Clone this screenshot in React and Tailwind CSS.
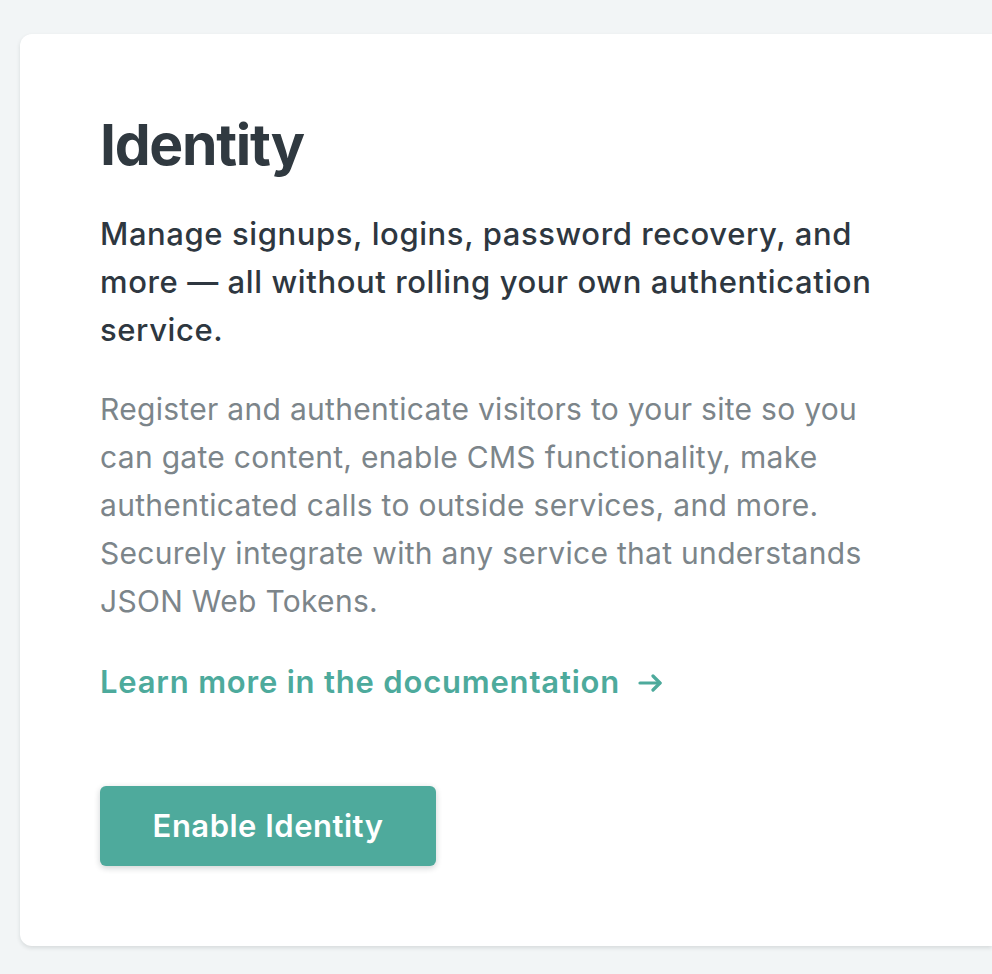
export default function App() {
  return (
    <div className="min-h-screen bg-[#f2f5f6] pt-[34px] pl-[20px]" style={{ fontFamily: 'Inter, "Noto Sans", sans-serif' }}>
      <div className="bg-white rounded-l-[12px] shadow-[0_2px_4px_rgba(14,30,37,0.12)] pl-[80px] pt-[75px] pb-[80px]">
        <h1 className="text-[57px] leading-[72px] font-bold text-[#303940] tracking-[-1.3px]">Identity</h1>
        <div className="max-w-[790px]">
          <p className="mt-[29px] text-[31px] leading-[48px] font-medium text-[#2e3740] tracking-[0.6px]">
            Manage signups, logins, password recovery, and more — all without rolling your own authentication service.
          </p>
          <p className="mt-[31px] text-[30px] leading-[48px] text-[#7c858a] tracking-[0.3px]">
            Register and authenticate visitors to your site so you can gate content, enable CMS functionality, make
            authenticated calls to outside services, and more. Securely integrate with any service that understands
            JSON Web Tokens.
          </p>
          <a href="#" className="mt-[33px] inline-flex items-center text-[31px] leading-[48px] font-semibold text-[#4daa9c] tracking-[0.8px]">
            Learn more in the documentation
            <svg className="ml-[18px] mt-[2px]" width="25" height="18" viewBox="0 0 25 18" fill="none" stroke="currentColor" strokeWidth="3.2" strokeLinecap="round" strokeLinejoin="round">
              <path d="M2 9h20" />
              <path d="M15 2l7 7-7 7" />
            </svg>
          </a>
        </div>
        <button className="mt-[80px] block w-[336px] h-[80px] rounded-[6px] bg-[#4eaa9c] text-white text-[31px] font-semibold tracking-[0.5px] shadow-[0_2px_6px_rgba(14,30,37,0.2)]">
          Enable Identity
        </button>
      </div>
    </div>
  );
}
